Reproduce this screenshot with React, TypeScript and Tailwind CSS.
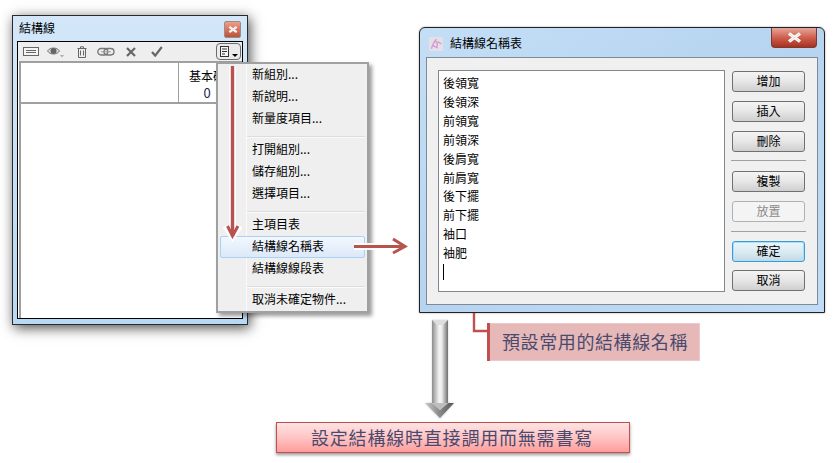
const font = "font-['Noto_Sans_CJK_TC','Noto_Sans_CJK_SC',sans-serif]";

function Glyph({ children, w = 18, h = 16 }: { children: React.ReactNode; w?: number; h?: number }) {
  return (
    <svg width={w} height={h} viewBox={`0 0 ${w} ${h}`} fill="none" className="block shrink-0">
      {children}
    </svg>
  );
}

function Toolbar() {
  return (
    <div className="h-[19px] bg-[#eeeeee] flex items-center pl-[5px] pr-[1px] relative">
      <div className="w-[16px] flex justify-center">
        <Glyph w={16} h={10}>
          <rect x="0.5" y="0.5" width="15" height="8" stroke="#666" fill="#f4f4f4" />
          <path d="M3 3.5h10M3 5.5h10" stroke="#666" />
        </Glyph>
      </div>
      <div className="w-[17px] ml-[8px]">
        <Glyph w={18} h={12}>
          <path d="M0.5 5C3 1 10 1 12.5 5C10 9 3 9 0.5 5Z" stroke="#777" fill="#ddd" />
          <circle cx="6.5" cy="5" r="3" fill="#666" />
          <path d="M13 9h4l-2 2.5z" fill="#aaa" />
        </Glyph>
      </div>
      <div className="w-[11px] ml-[13px]">
        <Glyph w={10} h={12}>
          <path d="M0.5 2.5h9M3.5 2.5V0.8h3v1.7M1.5 2.5v9h7v-9M3.5 4.5v5M6.5 4.5v5" stroke="#666" />
        </Glyph>
      </div>
      <div className="w-[18px] ml-[9px]">
        <Glyph w={18} h={10}>
          <rect x="0.8" y="1.5" width="10" height="6.5" rx="3.2" stroke="#777" strokeWidth="1.3" />
          <rect x="7" y="1.5" width="10" height="6.5" rx="3.2" stroke="#777" strokeWidth="1.3" />
          <path d="M4 4.8h10" stroke="#999" />
        </Glyph>
      </div>
      <div className="w-[10px] ml-[11px]">
        <Glyph w={10} h={10}>
          <path d="M1 1l8 8M9 1l-8 8" stroke="#666" strokeWidth="2.2" />
        </Glyph>
      </div>
      <div className="w-[12px] ml-[15px]">
        <Glyph w={12} h={11}>
          <path d="M1 6l3.2 3.6L10.8 1" stroke="#666" strokeWidth="2.2" />
        </Glyph>
      </div>
      <div className="ml-auto w-[25px] h-[17px] border border-[#6b6b6b] rounded-[4px] bg-[#ebebeb] flex items-center justify-center gap-[3px]">
        <Glyph w={9} h={11}>
          <rect x="0.5" y="0.5" width="8" height="10" stroke="#333" fill="#f6f6f6" />
          <path d="M2 3h5M2 5.5h5M2 8h3" stroke="#333" />
        </Glyph>
        <div className="mt-[7px] w-0 h-0 border-x-[3px] border-x-transparent border-t-[3px] border-t-black" />
      </div>
    </div>
  );
}

function CloseGlyph({ big }: { big?: boolean }) {
  return (
    <svg width={big ? 15 : 10} height={big ? 11 : 9} viewBox="0 0 15 11" className="block">
      <path d="M2 1.5l11 8M13 1.5l-11 8" stroke="#fff" strokeWidth="3.4" />
      <path d="M2 1.5l11 8M13 1.5l-11 8" stroke="#6b6b6b" strokeWidth="0.5" opacity="0.4" />
    </svg>
  );
}

function StructureWindow() {
  return (
    <div className="absolute left-[12px] top-[15px] w-[236px] h-[310px] border border-[#2b2b2b] bg-gradient-to-b from-[#d3e7f9] to-[#b9d8f4] shadow-[2px_3px_12px_rgba(0,0,0,0.7)] flex flex-col">
      <div className="h-[25px] flex justify-between pl-[6px] pr-[6px] shrink-0">
        <span className="text-[12px] leading-[24px] text-black">結構線</span>
        <div className="mt-[5px] w-[17px] h-[17px] border border-[#9a8c88] rounded-[2px] bg-gradient-to-b from-[#eba08c] via-[#d9735c] to-[#b8543e] flex items-center justify-center">
          <CloseGlyph />
        </div>
      </div>
      <div className="mx-[4px] mb-[5px] flex-1 border border-black bg-white flex flex-col min-h-0">
        <Toolbar />
        <div className="flex-1 ml-px border-l-2 border-t-2 border-[#a0a0a0]">
          <div className="h-[41px] border-b-2 border-[#a0a0a0] flex">
            <div className="w-[158px] border-r border-[#a0a0a0]" />
            <div className="w-[56px] text-center text-[12px] leading-[17px] pt-[4px] text-black">
              <div>基本碼</div>
              <div className="text-[#1a2a50] text-[13px]">0</div>
            </div>
          </div>
        </div>
      </div>
    </div>
  );
}

function Sep({ pt }: { pt: string }) {
  return (
    <div className={`h-[9px] ${pt}`}>
      <div className="h-[2px] bg-[#fafafa] border-t border-[#dddddd] mr-[2px]" />
    </div>
  );
}

function Item({ label, active }: { label: string; active?: boolean }) {
  return active ? (
    <div className="h-[22px] -ml-[27px] mr-[2px] pl-[31px] border border-[#a9d0f5] rounded-[2px] bg-gradient-to-b from-[#f2f7fd] to-[#dce9f9] text-[12px] leading-[18px] text-black">
      {label}
    </div>
  ) : (
    <div className="h-[22px] pl-[5px] text-[12px] leading-[20px] text-black">{label}</div>
  );
}

function ContextMenu() {
  return (
    <div className="absolute left-[216px] top-[62px] w-[153px] h-[251px] border-2 border-[#a0a0a0] bg-[#efefef] shadow-[3px_3px_4px_rgba(0,0,0,0.4)] flex">
      <div className="w-[29px] shrink-0 border-r border-[#fafafa]" />
      <div className="flex-1 flex flex-col">
        <Item label="新組別..." />
        <Item label="新說明..." />
        <Item label="新量度項目..." />
        <Sep pt="pt-[6px]" />
        <Item label="打開組別..." />
        <Item label="儲存組別..." />
        <Item label="選擇項目..." />
        <Sep pt="pt-[6px]" />
        <Item label="主項目表" />
        <Item label="結構線名稱表" active />
        <Item label="結構線線段表" />
        <Sep pt="pt-[6px]" />
        <Item label="取消未確定物件..." />
      </div>
    </div>
  );
}

function DlgButton({ label, kind }: { label: string; kind?: "off" | "def" }) {
  const cls =
    kind === "off"
      ? "border-[#adb2b5] bg-[#f4f4f4] text-[#8a8a8a]"
      : kind === "def"
        ? "border-[#3c9ad5] shadow-[inset_0_0_0_1px_#a8e0f8] bg-gradient-to-b from-[#eaf5fb] via-[#dcebf3] to-[#c3d9e4] text-black"
        : "border-[#707070] bg-gradient-to-b from-[#f4f4f4] via-[#e6e6e6] to-[#cfcfcf] text-black";
  return (
    <div className={`h-[21px] border rounded-[3px] text-center text-[12px] leading-[18px] ${cls}`}>{label}</div>
  );
}

const names = ["後領寬", "後領深", "前領寬", "前領深", "後肩寬", "前肩寬", "後下擺", "前下擺", "袖口", "袖肥"];

function NamesDialog() {
  return (
    <div className="absolute left-[419px] top-[27px] w-[406px] h-[286px] border border-[#222] rounded-t-[6px] bg-gradient-to-br from-[#c4def6] via-[#b6d4f0] to-[#c0dcf6] shadow-[0_0_2px_rgba(0,0,0,0.4)] flex flex-col pb-[7px] px-[6px]">
      <div className="h-[29px] shrink-0 flex items-start relative">
        <svg width="14" height="14" viewBox="0 0 18 18" className="mt-[9px] ml-[3px] mr-[3px] block">
          <rect x="0" y="0" width="18" height="18" fill="#e4e0e8" />
          <path d="M3 15C5 10 6 5 10 3M7 5c3 1 5 4 3 8M11 6l5 3M5 11l6 3" stroke="#d79ad0" strokeWidth="1.8" fill="none" />
        </svg>
        <span className="ml-[4px] text-[12px] leading-[30px] text-black">結構線名稱表</span>
        <div className="ml-auto mr-px w-[46px] h-[20px] rounded-b-[4px] border border-t-0 border-[#7a3a32] bg-gradient-to-b from-[#e6a598] via-[#cf5f4e] to-[#a8301f] flex items-center justify-center">
          <CloseGlyph big />
        </div>
      </div>
      <div className="flex-1 border border-[#7f8a94] bg-[#f0f0f0] flex pl-[11px] pt-[12px] gap-[7px]">
        <div className="w-[287px] h-[222px] border border-[#828790] bg-white pl-[4px] pt-[3px] text-[12px] leading-[18.9px] text-black shrink-0">
          {names.map((n) => (
            <div key={n}>{n}</div>
          ))}
          <div className="w-px h-[16px] bg-black mt-[1px]" />
        </div>
        <div className="w-[73px] mt-px flex flex-col">
          <DlgButton label="增加" />
          <div className="h-[9px]" />
          <DlgButton label="插入" />
          <div className="h-[9px]" />
          <DlgButton label="刪除" />
          <div className="h-px bg-[#a0a0a0] -mx-px mt-[8px] mb-[10px]" />
          <DlgButton label="複製" />
          <div className="h-[9px]" />
          <DlgButton label="放置" kind="off" />
          <div className="h-px bg-[#a0a0a0] -mx-px mt-[9px] mb-[9px]" />
          <DlgButton label="確定" kind="def" />
          <div className="h-[8px]" />
          <DlgButton label="取消" />
        </div>
      </div>
    </div>
  );
}

function Overlays() {
  return (
    <svg width="834" height="463" viewBox="0 0 834 463" className="absolute left-0 top-0 pointer-events-none">
      <defs>
        <linearGradient id="shaft" x1="0" x2="1" y1="0" y2="0">
          <stop offset="0" stopColor="#8c8c8c" />
          <stop offset="0.45" stopColor="#f4f4f4" />
          <stop offset="0.6" stopColor="#eeeeee" />
          <stop offset="1" stopColor="#6e6e6e" />
        </linearGradient>
        <linearGradient id="headL" x1="0" x2="1" y1="0" y2="0">
          <stop offset="0" stopColor="#c8c8c8" />
          <stop offset="0.5" stopColor="#8a8a8a" />
          <stop offset="1" stopColor="#555" />
        </linearGradient>
        <filter id="soft" x="-20%" y="-20%" width="140%" height="140%">
          <feGaussianBlur stdDeviation="1.2" />
        </filter>
      </defs>

      {/* red arrow: menu button down to the list item */}
      <path d="M232.5 66V232" stroke="#fff" strokeWidth="7" opacity="0.9" />
      <path d="M225 226l7.5 11l7.5-11" stroke="#fff" strokeWidth="6" fill="none" opacity="0.9" />
      <path d="M232.5 66V236" stroke="#b85450" strokeWidth="3.4" fill="none" />
      <path d="M227.5 226L232.5 236L238 226" stroke="#b85450" strokeWidth="3" fill="none" />

      {/* red arrow: list item over to the dialog */}
      <path d="M354 246.5H400" stroke="#fff" strokeWidth="7" opacity="0.9" />
      <path d="M354 246.5H403" stroke="#b85450" strokeWidth="3" />
      <path d="M393 239L405 246.5L393 253" stroke="#b85450" strokeWidth="3" fill="none" />

      {/* callout connector */}
      <path d="M474 313V331H488" stroke="#c0504d" strokeWidth="2.4" fill="none" />
      <rect x="487" y="323" width="3" height="38" fill="#c0504d" />

      {/* grey down arrow */}
      <path d="M432 320H448V403H454L440 419L425 403H432Z" fill="#000" opacity="0.18" filter="url(#soft)" />
      <rect x="432" y="320" width="16" height="83" fill="url(#shaft)" />
      <path d="M432 320H448L443 325H437Z" fill="#dedede" />
      <path d="M425 403L432 403L440 410L448 403L454 403L440 418Z" fill="url(#headL)" />
      <path d="M432 403L440 410L448 403Z" fill="#bdbdbd" />
    </svg>
  );
}

export default function App() {
  return (
    <div className={`relative w-[834px] h-[463px] bg-white overflow-hidden ${font}`}>
      <StructureWindow />
      <NamesDialog />
      <ContextMenu />
      <Overlays />
      <div className="absolute left-[490px] top-[323px] w-[210px] h-[38px] bg-[#e6b8b7] border border-[#ecc9c8] border-l-0 pl-[12px] text-[18px] tracking-[0.6px] leading-[34px] text-[#4a4a6e] whitespace-nowrap">
        預設常用的結構線名稱
      </div>
      <div className="absolute left-[276px] top-[422px] w-[354px] h-[31px] border border-[#c0504d] bg-gradient-to-b from-[#ffe3e3] via-[#ffc4c4] to-[#ff9c9c] shadow-[0_2px_3px_rgba(0,0,0,0.4)] pr-[2px] text-center text-[18px] tracking-[0.8px] leading-[29px] text-[#4a4a6e] whitespace-nowrap">
        設定結構線時直接調用而無需書寫
      </div>
    </div>
  );
}
